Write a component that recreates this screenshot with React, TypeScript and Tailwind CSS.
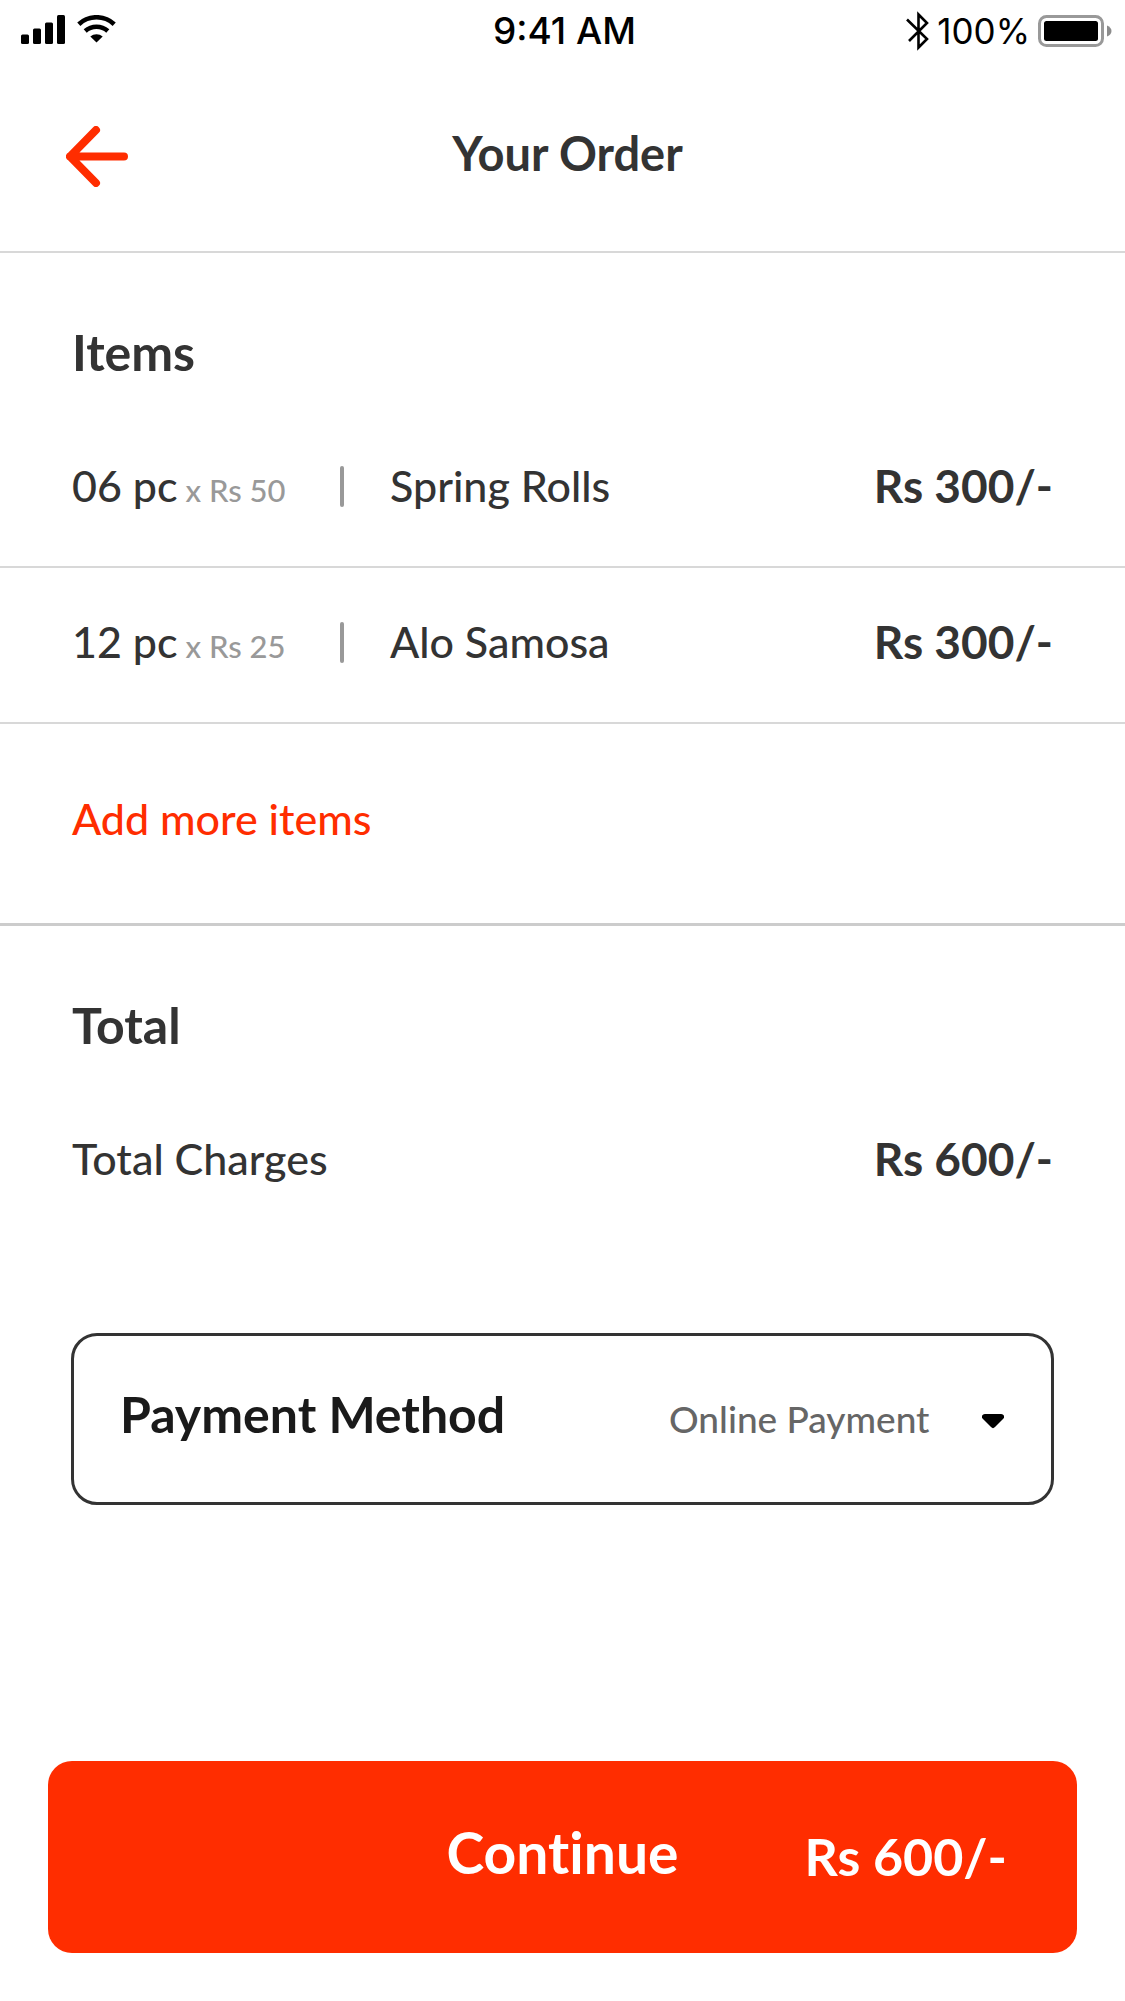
import React from 'react';

interface OrderItem {
  quantity: string;
  unitPrice: string;
  name: string;
  price: string;
}

const items: OrderItem[] = [
  { quantity: '06 pc', unitPrice: 'x Rs 50', name: 'Spring Rolls', price: 'Rs 300/-' },
  { quantity: '12 pc', unitPrice: 'x Rs 25', name: 'Alo Samosa', price: 'Rs 300/-' },
];

const StatusBar: React.FC = () => (
  <div className="grid h-[62px] grid-cols-[1fr_auto_1fr] items-center pl-[21px] pr-[13px] font-['Inter',sans-serif] leading-[40px] text-black">
    <div className="flex items-center gap-3 pb-1">
      <svg className="h-[29px] w-[44px]" viewBox="0 0 44 29" aria-label="Signal strength">
        <rect x="0" y="19.5" width="8" height="9.5" rx="1.5" />
        <rect x="12" y="13.5" width="8" height="15.5" rx="1.5" />
        <rect x="24" y="7.5" width="8" height="21.5" rx="1.5" />
        <rect x="36" y="0" width="8" height="29" rx="1.5" />
      </svg>
      <svg className="h-[28px] w-[39px]" viewBox="0 0 39 28" aria-label="Wi-Fi">
        <path d="M1.8 9.2a26 26 0 0 1 35.4 0M8.2 16a17 17 0 0 1 22.6 0" fill="none" stroke="#000" strokeWidth="4.6" />
        <path d="M19.5 27.5 13.3 21.5a9.5 9.5 0 0 1 12.4 0z" />
      </svg>
    </div>
    <time className="pr-1 text-[37px] font-medium">9:41 AM</time>
    <div className="flex items-center justify-end text-[35px] font-normal">
      <svg className="h-[40px] w-[23px]" viewBox="0 0 23 40" fill="none" stroke="#000" strokeWidth="2.6" aria-label="Bluetooth">
        <path d="M1 8.5 21 28 12.5 36.5V3.5L21 12 3 30" />
      </svg>
      <span className="ml-2">100%</span>
      <svg className="ml-2 h-[32px] w-[74px]" viewBox="0 0 74 32" aria-label="Battery full">
        <rect x="1.5" y="1.5" width="63" height="29" rx="7" fill="none" stroke="#999" strokeWidth="3" />
        <rect x="6" y="6" width="54" height="20" rx="2.5" />
        <path d="M69 10.5q4.5 2 4.5 5.5T69 21.5z" fill="#8c8c8c" />
      </svg>
    </div>
  </div>
);

const SectionTitle: React.FC<{ children: React.ReactNode }> = ({ children }) => (
  <h2 className="px-[72px] pb-8 pt-[71px] text-[50px] font-bold leading-[56px]">{children}</h2>
);

const OrderRow: React.FC<{ item: OrderItem }> = ({ item }) => (
  <li className="flex items-center border-b-2 border-[#d8d8d8] px-[72px] pb-[56px] pt-[50px]">
    <div className="flex w-[268px] items-baseline gap-2 whitespace-nowrap">
      <span>{item.quantity}</span>
      <span className="text-[31px] leading-[32px] text-[#999]">{item.unitPrice}</span>
    </div>
    <span className="h-[41px] w-1 rounded-full bg-[#999]"></span>
    <span className="ml-[46px] flex-1">{item.name}</span>
    <span className="text-[46px] font-bold">{item.price}</span>
  </li>
);

const App: React.FC = () => {
  const [payment, setPayment] = React.useState('Online Payment');

  return (
    <div className="flex min-h-screen flex-col bg-white font-['Lato',sans-serif] text-[43px] font-medium leading-[48px] text-[#333] [font-variant-ligatures:no-common-ligatures]">
      <StatusBar />

      {/* Header */}
      <header className="grid grid-cols-[1fr_auto_1fr] items-center border-b-2 border-[#d8d8d8] pb-16 pl-[66px] pr-[56px] pt-16">
        <button type="button" aria-label="Back" className="justify-self-start">
          <svg className="h-[61px] w-[62px]" viewBox="0 0 62 61" fill="none" stroke="#ff2d00" strokeWidth="8" strokeLinecap="round" strokeLinejoin="round">
            <path d="M30 4 4 30.5 30 57M4 30.5H58" />
          </svg>
        </button>
        <h1 className="pb-2 text-[47px] font-bold">Your Order</h1>
      </header>

      <main className="flex flex-1 flex-col">
        {/* Items */}
        <section className="border-b-3 border-[#ccc]">
          <SectionTitle>Items</SectionTitle>
          <ul>
            {items.map((item) => (
              <OrderRow key={item.name} item={item} />
            ))}
          </ul>
          <div className="px-[72px] pb-20 pt-[71px]">
            <a href="#menu" className="block text-[#ff2d00]">Add more items</a>
          </div>
        </section>

        {/* Total */}
        <section>
          <SectionTitle>Total</SectionTitle>
          <div className="flex justify-between px-[72px] pb-[56px] pt-[50px]">
            <span>Total Charges</span>
            <span className="text-[46px] font-bold">Rs 600/-</span>
          </div>
        </section>

        {/* Payment method */}
        <div className="mx-[71px] mt-[94px] flex items-baseline justify-between rounded-[26px] border-3 border-[#333] pb-[59px] pl-[46px] pr-[47px] pt-[50px]">
          <label htmlFor="payment" className="text-[50px] font-bold leading-[56px] text-[#1a1a1a]">Payment Method</label>
          <div className="relative">
            <select
              id="payment"
              value={payment}
              onChange={(e) => setPayment(e.target.value)}
              className="appearance-none bg-transparent pr-[74px] text-[37px] leading-[48px] text-[#666]"
            >
              <option>Online Payment</option>
            </select>
            <svg className="pointer-events-none absolute right-0 top-[21px] h-[15px] w-[22px]" viewBox="0 0 22 15">
              <path d="M3 0h16c3 0 4 3 2 5l-8 8c-1.5 1.5-2.5 1.5-4 0L1 5C-1 3 0 0 3 0z" />
            </svg>
          </div>
        </div>

        {/* Checkout */}
        <div className="mt-auto px-12 pb-12">
          <button type="button" className="grid w-full grid-cols-[1fr_auto_1fr] items-center rounded-[24px] bg-[#ff2d00] px-[70px] pb-[65px] pt-[55px] font-bold leading-[64px] text-white">
            <span className="col-start-2 text-[57px]">Continue</span>
            <span className="pt-2 text-right text-[52px]">Rs 600/-</span>
          </button>
        </div>
      </main>
    </div>
  );
};

export default App;
